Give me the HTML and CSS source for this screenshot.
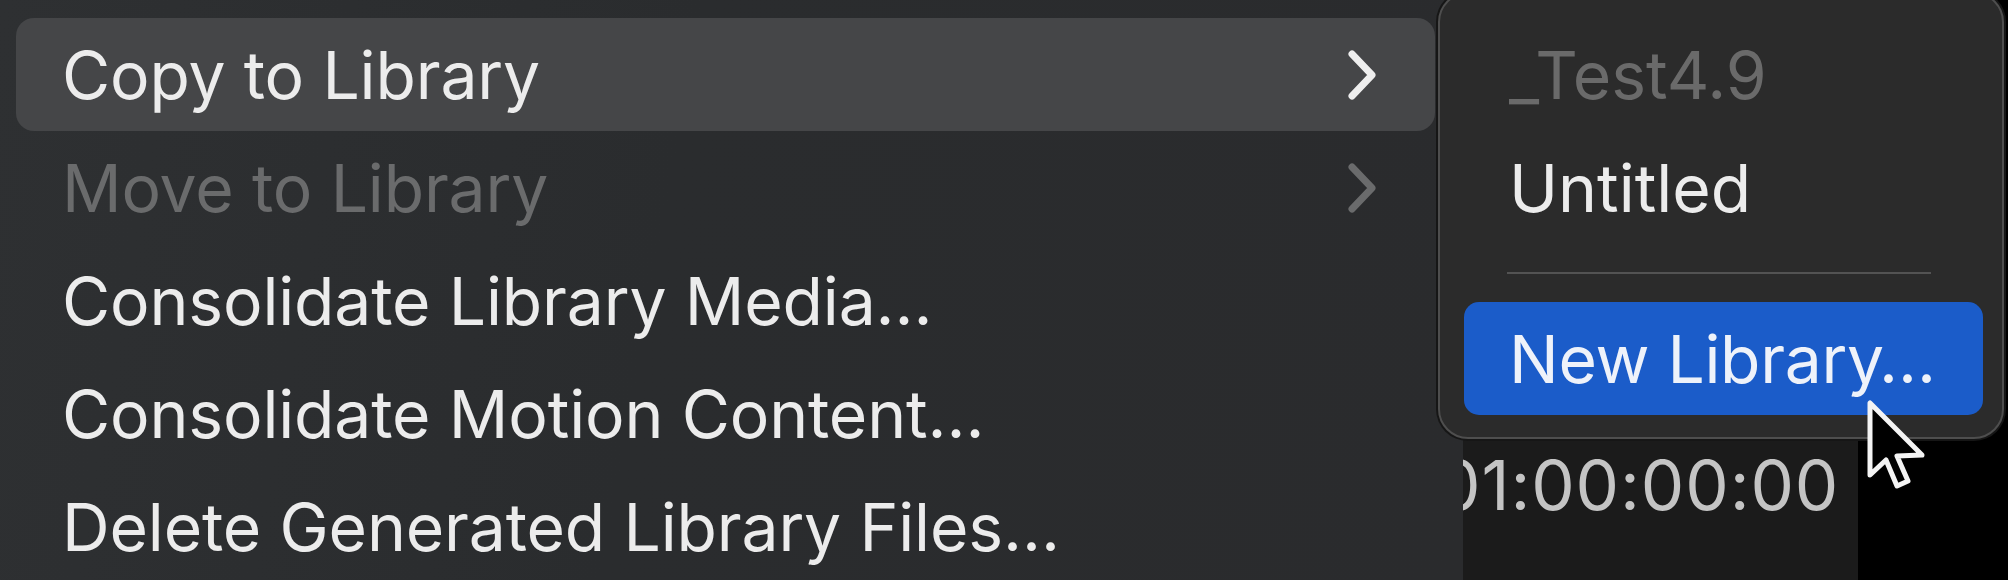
FILE: index.html
```html
<!DOCTYPE html>
<html lang="en">
<head>
<meta charset="utf-8">
<title>Copy to Library menu</title>
<link rel="stylesheet" href="styles.css">
</head>
<body>
<div class="screen">
  <div class="menu">
    <div class="item active">
      <span class="label">Copy to Library</span>
      <svg class="chev" viewBox="0 0 30 50" width="30" height="50"><path d="M5 4 L25 25 L5 46"/></svg>
    </div>
    <div class="item disabled">
      <span class="label">Move to Library</span>
      <svg class="chev" viewBox="0 0 30 50" width="30" height="50"><path d="M5 4 L25 25 L5 46"/></svg>
    </div>
    <div class="item"><span class="label">Consolidate Library Media…</span></div>
    <div class="item"><span class="label">Consolidate Motion Content…</span></div>
    <div class="item"><span class="label">Delete Generated Library Files…</span></div>
  </div>
  <div class="timeline"><span class="timecode">01:00:00:00</span></div>
  <div class="void"></div>

  <div class="submenu">
    <div class="sitem disabled">_Test4.9</div>
    <div class="sitem">Untitled</div>
    <div class="sep"></div>
    <div class="sitem selected">New Library…</div>
  </div>

  <svg class="cursor" viewBox="-4 -4 64 94" width="64" height="94">
    <path d="M0 0 L0 72 L16 57 L27 83 L38 78 L27 53 L52 52 Z"/>
  </svg>
</div>
</body>
</html>
```

FILE: styles.css
```css
html, body {
  margin: 0;
  padding: 0;
  background: #000;
}

.screen {
  position: relative;
  width: 2008px;
  height: 580px;
  display: flex;
  overflow: hidden;
  background: #000;
  font-family: Inter, "Liberation Sans", "Noto Sans", sans-serif;
  -webkit-font-smoothing: antialiased;
}

.menu {
  width: 1463px;
  flex: none;
  box-sizing: border-box;
  padding: 18px 28px 0 16px;
  background: linear-gradient(100deg, #2e3032 0%, #2a2c2e 45%, #2a2b2d 100%);
}

.item {
  height: 113px;
  display: flex;
  align-items: center;
  justify-content: space-between;
  padding: 0 58px 0 46px;
  border-radius: 18px;
  color: #ececec;
  font-size: 66px;
  letter-spacing: -0.15px;
  line-height: 1;
}

.item.active {
  background: #454648;
}

.item.disabled {
  color: #6a6b6c;
}

.chev {
  flex: none;
  fill: none;
  stroke: #eeeeee;
  stroke-width: 7;
  stroke-linecap: round;
  stroke-linejoin: round;
}

.item.disabled .chev {
  stroke: #6a6b6c;
}

.timeline {
  width: 395px;
  flex: none;
  overflow: hidden;
  background: #1b1b1b;
  box-sizing: border-box;
  padding-top: 451px;
}

.timecode {
  display: block;
  margin-left: -26px;
  white-space: nowrap;
  color: #c4c4c4;
  font-size: 69px;
  letter-spacing: 0.9px;
  line-height: 69px;
}

.void {
  flex: 1;
  background: #000;
}

.submenu {
  position: absolute;
  left: 1438px;
  top: -8px;
  width: 566px;
  box-sizing: border-box;
  border: 2px solid #4e4e4e;
  border-radius: 30px;
  background: #2b2b2b;
  padding: 24px 19px 22px 24px;
  box-shadow: 0 0 0 2px #161616;
}

.sitem {
  height: 113px;
  display: flex;
  align-items: center;
  padding-left: 45px;
  border-radius: 15px;
  color: #ececec;
  font-size: 66px;
  line-height: 1;
}

.sitem.disabled {
  color: #6a6a6a;
}

.sitem.selected {
  background: #1b5cc9;
  color: #eef2fa;
  letter-spacing: -0.3px;
}

.sep {
  height: 2px;
  background: #535353;
  margin: 28px 52px 28px 43px;
}

.cursor {
  position: absolute;
  left: 1866px;
  top: 399px;
}

.cursor path {
  fill: #000;
  stroke: #f4f4f4;
  stroke-width: 5;
  stroke-linejoin: round;
}
```
